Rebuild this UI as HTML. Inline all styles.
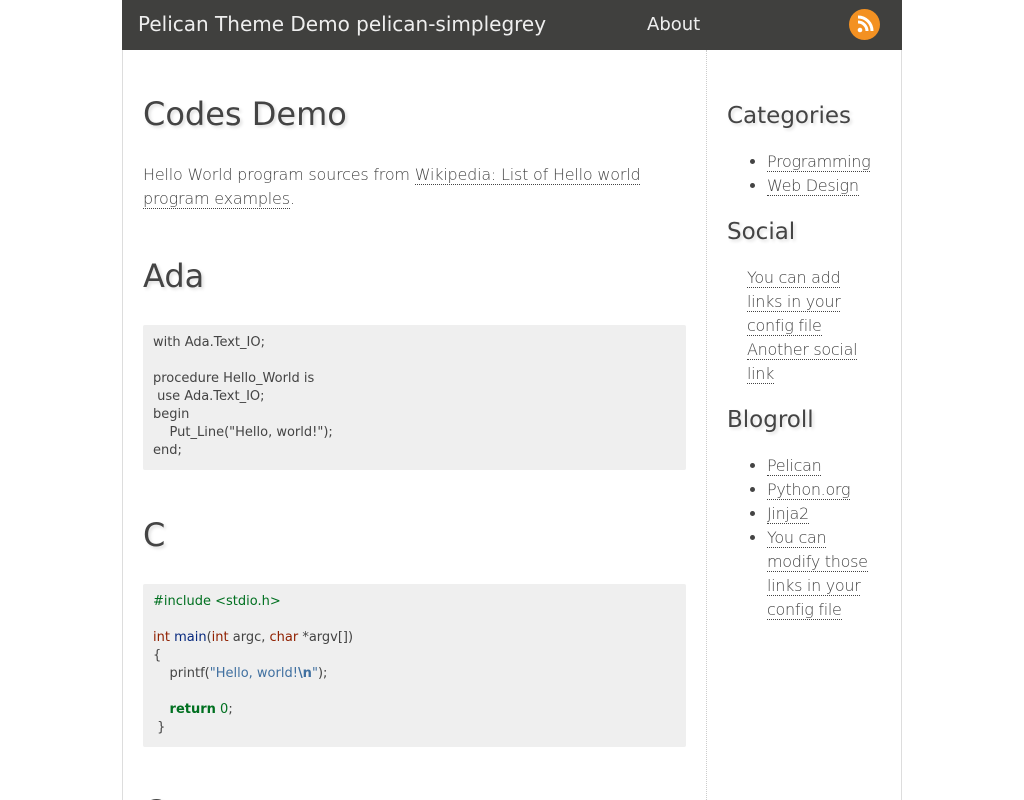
<!DOCTYPE html>
<html><head><meta charset="utf-8"><style>
*{margin:0;padding:0;box-sizing:border-box}
html,body{width:1024px;height:800px;overflow:hidden}
body{background:#fff;font-family:"DejaVu Sans",sans-serif;color:#444;font-weight:200}
#hdr{position:absolute;left:122px;top:0;width:780px;height:50px;background:#40403e;color:#eee}
#hdr .t{position:absolute;left:16px;top:12px;font-size:20px;font-weight:400;color:#eee}
#hdr .a{position:absolute;left:525px;top:14px;font-size:18px;font-weight:400}
#rss{position:absolute;left:727px;top:9px;width:31px;height:31px;border-radius:50%;background:#f39122}
#wrap{position:absolute;left:122px;top:50px;width:780px;height:750px;border-left:1px solid #ddd;border-right:1px solid #ddd;overflow:hidden}
#side{position:absolute;left:583px;top:0;width:195px;height:760px;border-left:1px dotted #ccc}
h1,h2{font-weight:400;color:#444;text-shadow:2px 2px 3px #ddd;position:absolute;white-space:nowrap}
h1{font-size:32px}
h2{font-size:23px}
p{position:absolute;left:20px;width:520px;font-size:16px;line-height:24px;letter-spacing:-0.2px}
a{color:#444;text-decoration:none;border-bottom:1px dotted #444}
pre{position:absolute;left:20px;width:543px;background:#efefef;border-radius:2px;padding:9px 10px 10px 10px;font-family:"DejaVu Sans",sans-serif;font-size:13px;line-height:18px;color:#444;font-weight:400;letter-spacing:0}
ul{position:absolute;font-size:16px;line-height:24px;list-style:disc;padding-left:60px;width:170px;letter-spacing:-0.3px}
.k{color:#902000}.f{color:#06287e}.g{color:#007020}.s{color:#4070a0}
</style></head><body>
<div id="hdr"><div class="t">Pelican Theme Demo pelican-simplegrey</div><div class="a">About</div>
<div id="rss"><svg width="31" height="31" viewBox="0 0 31 31"><circle cx="11" cy="21" r="2.3" fill="#fff"/><path d="M9 13a9 9 0 0 1 9 9M9 8a14 14 0 0 1 14 14" stroke="#fff" stroke-width="3" fill="none"/></svg></div></div>
<div id="wrap">
<h1 style="left:20px;top:45px">Codes Demo</h1>
<p style="top:113px">Hello World program sources from <a>Wikipedia: List of Hello world</a><br><a>program examples</a>.</p>
<h1 style="left:20px;top:207px">Ada</h1>
<pre style="top:275px">with Ada.Text_IO;

procedure Hello_World is
 use Ada.Text_IO;
begin
    Put_Line("Hello, world!");
end;</pre>
<h1 style="left:20px;top:466px">C</h1>
<pre style="top:534px"><span class="g">#include &lt;stdio.h&gt;</span>

<span class="k">int</span> <span class="f">main</span>(<span class="k">int</span> argc, <span class="k">char</span> *argv[])
{
    printf(<span class="s">"Hello, world!<b>\n</b>"</span>);

    <b class="g">return</b> <span class="g">0</span>;
 }</pre>
<h1 style="left:20px;top:743px">C++</h1>
<div id="side">
<h2 style="left:20px;top:53px">Categories</h2>
<ul style="top:100px;left:0"><li><a>Programming</a></li><li><a>Web Design</a></li></ul>
<h2 style="left:20px;top:169px">Social</h2>
<div style="position:absolute;left:40px;top:216px;font-size:16px;line-height:24px;width:125px;letter-spacing:-0.3px"><a>You can add links in your</a> <a>config file</a> <a>Another social</a> <a>link</a></div>
<h2 style="left:20px;top:357px">Blogroll</h2>
<ul style="top:404px;left:0;width:168px"><li><a>Pelican</a></li><li><a>Python.org</a></li><li><a>Jinja2</a></li><li><a>You can modify those links in your config file</a></li></ul>
</div></div>
</body></html>
